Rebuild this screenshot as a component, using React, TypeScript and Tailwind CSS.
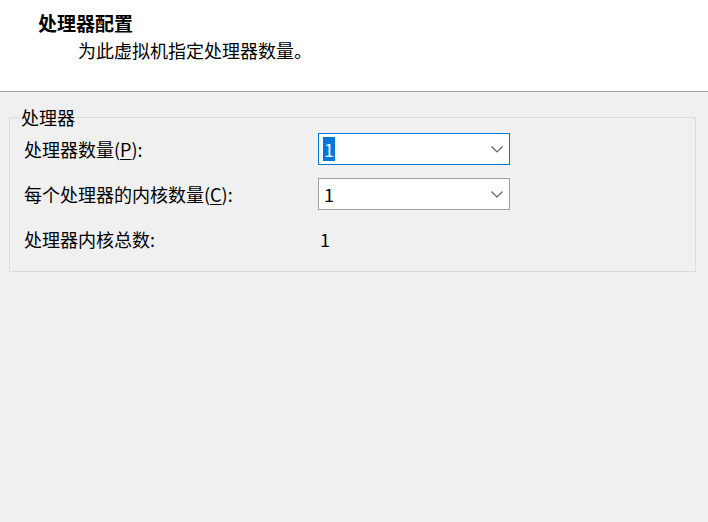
import * as React from "react";

const font = { fontFamily: '"Noto Sans CJK SC", "Noto Sans", sans-serif' };

function Chevron() {
  return (
    <svg width="12" height="7" viewBox="0 0 12 7" className="shrink-0">
      <path d="M0.5 0.5 L6 6 L11.5 0.5" fill="none" stroke="#606060" strokeWidth="1.2" />
    </svg>
  );
}

function Combo({ value, focused }: { value: string; focused?: boolean }) {
  return (
    <div
      className={
        "flex h-[32px] w-[192px] items-center justify-between bg-white pl-[4px] pr-[6px] " +
        (focused ? "border border-[#0078d7]" : "border border-[#a0a0a0]")
      }
    >
      {focused ? (
        <span className="bg-[#0078d7] px-[1px] leading-[24px] text-white">{value}</span>
      ) : (
        <span className="px-[1px] leading-[24px] text-black">{value}</span>
      )}
      <Chevron />
    </div>
  );
}

export default function App() {
  return (
    <div className="h-[522px] w-[708px] overflow-hidden bg-[#f0f0f0] text-[18px] text-black" style={font}>
      <div className="h-[92px] border-b border-[#a0a0a0] bg-white pt-[10px]">
        <div className="pl-[38px] text-[19px] font-bold leading-[26px]">处理器配置</div>
        <div className="mt-[1px] pl-[78px] leading-[26px]">为此虚拟机指定处理器数量。</div>
      </div>

      <fieldset className="ml-[9px] mt-[15px] w-[687px] border border-[#dcdcdc] pb-[16px] pl-[14px] pt-[6px]">
        <legend className="-ml-[4px] px-[1px] leading-[20px]">处理器</legend>
        <div className="grid grid-cols-[294px_192px] gap-y-[13px]">
          <div className="flex h-[32px] items-center">
            处理器数量(<span className="underline underline-offset-2">P</span>):
          </div>
          <Combo value="1" focused />

          <div className="flex h-[32px] items-center">
            每个处理器的内核数量(<span className="underline underline-offset-2">C</span>):
          </div>
          <Combo value="1" />

          <div className="flex h-[32px] items-center">处理器内核总数:</div>
          <div className="flex h-[32px] items-center pl-[2px]">1</div>
        </div>
      </fieldset>
    </div>
  );
}
